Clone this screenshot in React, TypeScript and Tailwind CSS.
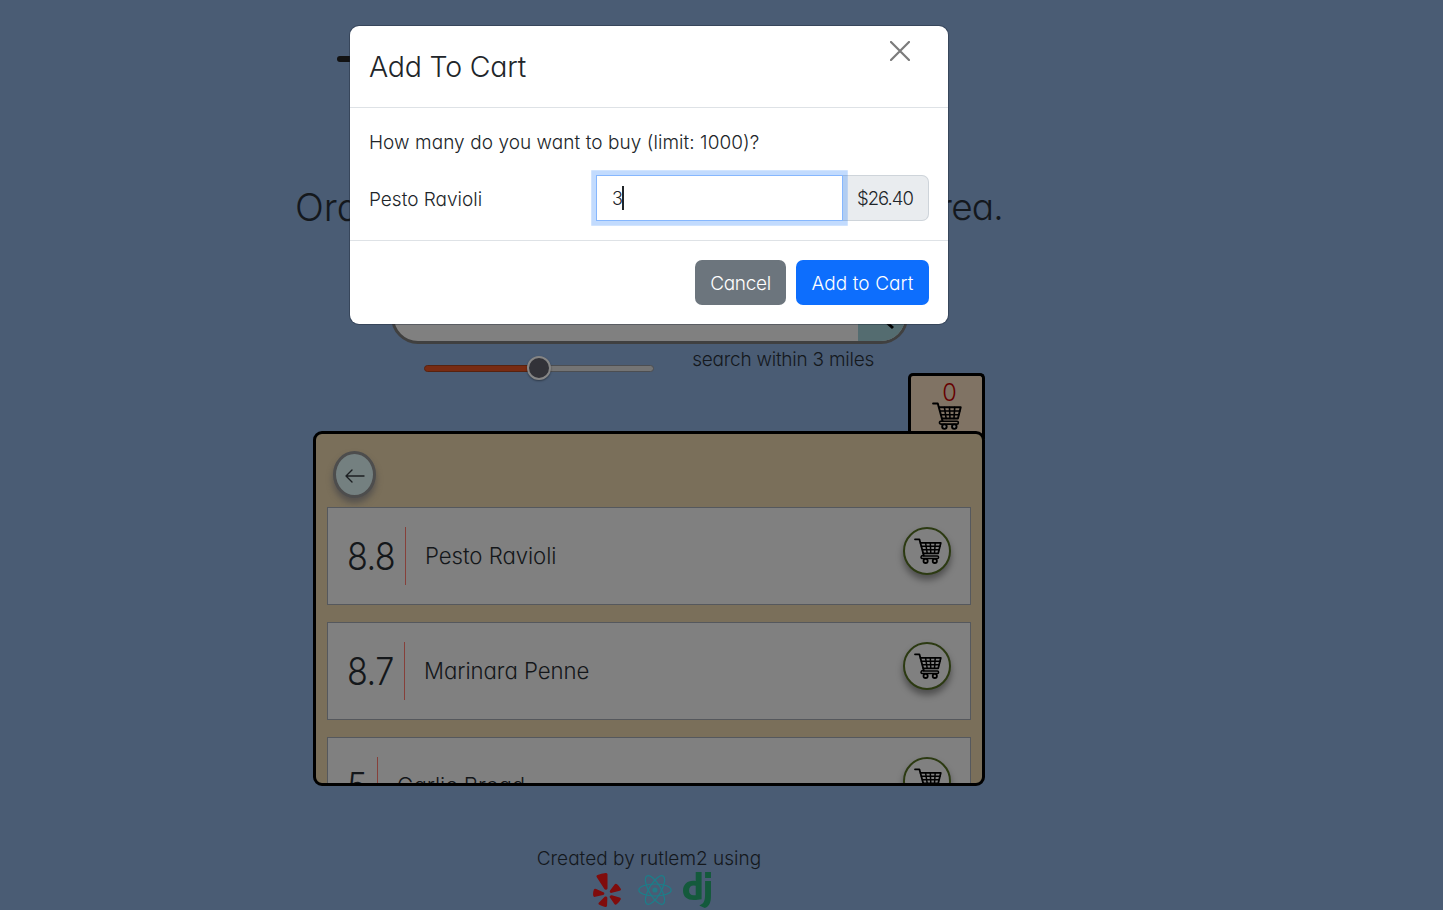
import React from 'react';
import { SiDjango } from 'react-icons/si';
import { FaYelp } from 'react-icons/fa';

function CartIcon({ className }: { className: string }) {
  return (
    <svg viewBox="0 0 28 26" fill="none" stroke="currentColor" strokeWidth="1.8" strokeLinecap="round" strokeLinejoin="round" className={className}>
      <path d="M1 1.3H5.4L9.8 17.4" />
      <path d="M6.6 4.9H26.8L24.2 15.4H9.4" />
      <path d="M7.4 8.3H26M8.4 11.8H25" strokeWidth="1.5" />
      <path d="M11.6 5L13.2 15.3M16.3 5L16.8 15.3M21.2 5L20.5 15.3" strokeWidth="1.5" />
      <path d="M9.2 17.6C6.4 17.6 6.2 20.6 8.8 20.6H23.4C25 20.6 25 17.9 23.4 17.9H9.2" strokeWidth="1.5" />
      <circle cx="11.6" cy="22.9" r="2.1" fill="#7d7b78" />
      <circle cx="20.8" cy="22.9" r="2.1" fill="#7d7b78" />
    </svg>
  );
}

function ReactLogo() {
  return (
    <svg viewBox="-17 -16 34 32" fill="none" className="h-8 w-[34px]">
      {[0, 60, 120].map((angle) => (
        <ellipse key={angle} rx="16.2" ry="6" transform={`rotate(${angle})`} stroke="#1b7f8a" strokeWidth="1.2" />
      ))}
      <circle r="2.6" fill="#1b7f8a" fillOpacity="0.85" />
    </svg>
  );
}

const items = [
  { score: '8.8', name: 'Pesto Ravioli', scoreWidth: 'w-[59px]' },
  { score: '8.7', name: 'Marinara Penne', scoreWidth: 'w-[58px]' },
  { score: '5', name: 'Garlic Bread', scoreWidth: 'w-[31px]' },
];

function MenuItem({ score, name, scoreWidth }: { score: string; name: string; scoreWidth: string }) {
  return (
    <li className="flex h-[98px] shrink-0 items-start border border-[#55585d] bg-[#808080] px-[19px] pt-[19px] text-[#14171a]">
      <div className={`flex h-[58px] items-center border-r border-[#86403a] pt-[3px] text-[37.5px] tracking-[-0.6px] ${scoreWidth}`}>
        <span className="origin-left scale-x-[0.91]">{score}</span>
      </div>
      <div className="flex h-[58px] items-center pl-[19px] text-[22.2px] tracking-[-0.05px]">{name}</div>
      <button className="ml-auto flex size-12 items-center justify-center rounded-full border-2 border-[#2c3a12] bg-[#808080] text-black shadow-[0_5px_7px_rgba(0,0,0,0.4)]">
        <CartIcon className="mb-px ml-px h-[26px] w-7" />
      </button>
    </li>
  );
}

function Modal() {
  return (
    <div className="absolute left-[350px] top-[26px] flex h-[298px] w-[598px] flex-col rounded-[9px] bg-white text-[19px] text-[#212529] shadow-[0_0_0_1px_rgba(20,30,45,0.35)]">
      <div className="flex h-[82px] items-start justify-between border-b border-[#dee2e6] pl-[19px] pr-[38px]">
        <h4 className="pt-[19px] text-[28.5px] leading-[43px] tracking-[-0.2px]">Add To Cart</h4>
        <svg viewBox="0 0 20 20" className="mt-[14.5px] size-5" stroke="#7b7b7b" strokeWidth="2.2" strokeLinecap="round">
          <path d="M1 1L19 19M19 1L1 19" />
        </svg>
      </div>
      <div className="flex h-[133px] flex-col border-b border-[#dee2e6] px-[19px] pt-[21px]">
        <p className="leading-[28px] tracking-[0.06px]">How many do you want to buy (limit: 1000)?</p>
        <div className="mt-[18px] flex h-[46px] items-center">
          <span className="w-[227px] pt-1">Pesto Ravioli</span>
          <div className="z-10 flex h-full w-[247px] items-center border border-[#86b7fe] bg-white pl-[15px] shadow-[0_0_0_4.75px_rgba(13,110,253,0.25)]">
            <span className="-mr-px text-[18px]">3</span>
            <span className="h-6 w-0.5 bg-[#212529]" />
          </div>
          <div className="flex h-full flex-1 items-center rounded-r-[7px] border border-l-0 border-[#ced4da] bg-[#e9ecef] pl-[14px] pt-0.5 text-[18.5px] tracking-[-1px]">$26.40</div>
        </div>
      </div>
      <div className="flex justify-end gap-2.5 px-[19px] pt-[19px] text-white">
        <button className="h-[45px] w-[91px] rounded-[7px] bg-[#6c757d] pt-[3px] tracking-[-0.3px]">Cancel</button>
        <button className="h-[45px] w-[133px] rounded-[7px] bg-[#0d6efd] pt-[3px] tracking-[0.1px]">Add to Cart</button>
      </div>
    </div>
  );
}

export default function App() {
  return (
    <div className="relative h-[910px] w-full overflow-hidden bg-[#4a5c74] font-['Inter',sans-serif] font-light text-[#14181d] [font-feature-settings:'cv11']">
      <main className="flex w-[1298px] flex-col items-center">
        <header className="flex h-[170px] w-[624px] items-start pt-14">
          <div className="h-1.5 w-10 rounded-full bg-[#121212]" />
        </header>
        <h2 className="flex h-[75px] w-[708px] items-center justify-between text-[38px]">
          <span>Ord</span>
          <span className="pb-0.5 text-[37px] tracking-[-0.8px]">rea.</span>
        </h2>

        <div className="mt-[45px] flex h-[54px] w-[517px] justify-end overflow-hidden rounded-[27px] border-[3px] border-[#404040] bg-[#808080]">
          <div className="flex w-[47px] items-end bg-[#546c70]">
            <svg viewBox="0 0 47 48" className="h-12 w-[47px]" fill="none" stroke="#000" strokeWidth="3">
              <circle cx="20" cy="20" r="9" />
              <path d="M26 27L35 35" />
            </svg>
          </div>
        </div>

        <div className="flex h-[29px] w-[450px] items-start justify-between">
          <div className="mt-3 flex h-6 w-[230px] items-center">
            <div className="h-[7px] w-[107px] rounded-l-full border border-[#57220f] bg-[#782b12]" />
            <div className="relative -mx-1 size-6 shrink-0 rounded-full border-2 border-[#858585] bg-[#323238] shadow-[0_1px_2px_rgba(0,0,0,0.4)]" />
            <div className="h-[7px] flex-1 rounded-r-full border border-[#4c4e52] bg-[#747474]" />
          </div>
          <p className="pt-0.5 text-[19px] leading-7 tracking-[-0.24px]">search within 3 miles</p>
        </div>

        <section className="flex w-[672px] flex-col">
          <div className="-mb-2 flex h-[66px] w-[77px] flex-col items-center self-end rounded-t-[5px] border-[3px] border-b-0 border-black bg-[#807364]">
            <span className="pl-1.5 pt-[5px] text-[23.5px] leading-6 text-[#660000]">0</span>
            <CartIcon className="-mt-[3px] h-7 w-[30px] text-black" />
          </div>
          <div className="relative flex h-[355px] flex-col overflow-hidden rounded-[9px] border-[3px] border-black bg-[#7a6f5a] px-[11px] pt-[17px]">
            <button className="ml-1.5 flex h-[47px] w-[43px] shrink-0 items-center justify-center rounded-[50%] border-[3px] border-[#4d4d4d] bg-[#748080] shadow-[0_5px_6px_rgba(60,62,70,0.6)]">
              <svg viewBox="0 0 20 14" className="mt-[3px] h-3.5 w-5" fill="none" stroke="#1c1f22" strokeWidth="1.4" strokeLinecap="round" strokeLinejoin="round">
                <path d="M19 7H1M7 1L1 7L7 13" />
              </svg>
            </button>
            <ul className="mt-[9px] flex flex-col gap-[17px]">
              {items.map((item) => (
                <MenuItem key={item.name} {...item} />
              ))}
            </ul>
          </div>
        </section>

        <footer className="flex flex-col items-center pt-[59px]">
          <p className="text-[19px] leading-7 tracking-[0.03px]">Created by rutlem2 using</p>
          <div className="-mt-px flex h-9 items-center gap-[17px] pl-2.5">
            <FaYelp className="h-[34px] w-7 text-[#800c0c]" preserveAspectRatio="none" />
            <ReactLogo />
            <SiDjango className="-ml-2.5 size-9 text-[#145a3c]" />
          </div>
        </footer>
      </main>
      <Modal />
    </div>
  );
}
